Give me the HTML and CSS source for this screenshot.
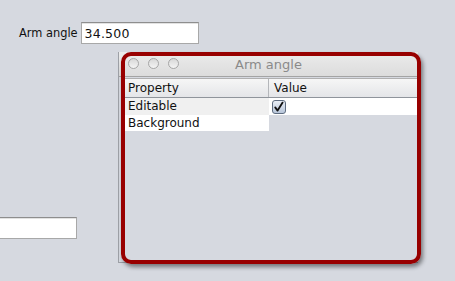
FILE: index.html
```html
<!DOCTYPE html>
<html>
<head>
<meta charset="utf-8">
<link rel="stylesheet" href="styles.css">
</head>
<body>
<div class="form">
  <div class="row">
    <span class="label">Arm angle</span>
    <div class="field">34.500</div>
  </div>
  <div class="field field-bottom"></div>
</div>

<div class="window">
  <div class="titlebar">
    <div class="lights">
      <span class="light"></span><span class="light"></span><span class="light"></span>
    </div>
    <div class="title">Arm angle</div>
  </div>
  <div class="table">
    <div class="thead">
      <div class="th th-prop">Property</div>
      <div class="th th-val">Value</div>
    </div>
    <div class="tr tr-alt">
      <div class="td td-prop">Editable</div>
      <div class="td td-val">
        <span class="check">
          <svg width="14" height="14" viewBox="0 0 14 14"><path d="M3.2 7.4 L5.6 10.6 L10.6 2.6" fill="none" stroke="#111" stroke-width="1.8" stroke-linecap="round" stroke-linejoin="round"/></svg>
        </span>
      </div>
    </div>
    <div class="tr">
      <div class="td td-prop td-white">Background</div>
    </div>
  </div>
</div>

<div class="annot"></div>
</body>
</html>
```
FILE: styles.css
```css
html, body {
  margin: 0;
  padding: 0;
}
body {
  width: 455px;
  height: 281px;
  overflow: hidden;
  background: #d6d9e0;
  font-family: "DejaVu Sans", sans-serif;
  font-size: 12px;
  color: #111;
  position: relative;
}
.form {
  display: flex;
  flex-direction: column;
  padding-top: 22px;
}
.row {
  display: flex;
  align-items: center;
  padding-left: 19px;
}
.label {
  margin-right: 3px;
  font-size: 11.4px;
}
.field {
  box-sizing: border-box;
  width: 118px;
  height: 22px;
  background: #fff;
  border: 1px solid #a8a8a8;
  border-top-color: #8e8e8e;
  box-shadow: inset 0 1px 0 #e2e2e2;
  padding: 3px 0 0 3px;
  font-size: 12.5px;
  letter-spacing: 0.2px;
}
.field-bottom {
  margin-top: 173px;
  margin-left: -41px;
}
.window {
  position: absolute;
  left: 118px;
  top: 52px;
  width: 300px;
  height: 211px;
  box-sizing: border-box;
  background: #d6d9e0;
  border-left: 1px solid #9da0a6;
  border-bottom: 1px solid #9da0a6;
  display: flex;
  flex-direction: column;
}
.titlebar {
  height: 24px;
  flex: none;
  background: linear-gradient(#ececec, #dcdcdc);
  border-bottom: 1px solid #a4a4a4;
  position: relative;
  display: flex;
  align-items: center;
  justify-content: center;
}
.lights {
  position: absolute;
  left: 9px;
  top: 6px;
  display: flex;
  gap: 9px;
}
.light {
  width: 9px;
  height: 9px;
  border-radius: 50%;
  border: 1px solid #a6a6a6;
  background: linear-gradient(#d8d8d8, #f4f4f4);
}
.title {
  color: #8a8a8a;
  font-size: 13px;
  margin-top: 1px;
}
.table {
  margin: 1px 0 0 3px;
  width: 295px;
  display: flex;
  flex-direction: column;
}
.thead {
  display: flex;
  height: 20px;
  box-sizing: border-box;
  background: linear-gradient(#f6f6f6, #e4e5e8);
  border-top: 1px solid #b0b0b0;
  border-bottom: 1px solid #8f949b;
}
.th {
  box-sizing: border-box;
  padding: 2px 0 0 6px;
}
.th-prop {
  width: 147px;
  border-right: 1px solid #b4b6ba;
}
.th-val {
  flex: 1;
  padding-left: 5px;
}
.tr {
  display: flex;
  height: 17px;
}
.td {
  box-sizing: border-box;
  padding: 1px 0 0 6px;
}
.td-prop {
  width: 147px;
}
.tr-alt .td-prop {
  background: #f0f0f0;
}
.td-val {
  flex: 1;
  background: #fff;
  padding: 2px 0 0 3px;
}
.td-white {
  background: #fff;
  height: 16px;
}
.check {
  display: block;
  width: 14px;
  height: 14px;
  box-sizing: border-box;
  border: 1px solid #5e6c80;
  border-radius: 3px;
  background: linear-gradient(#e9eef6, #b8c6da);
  position: relative;
}
.check svg {
  position: absolute;
  left: -1px;
  top: -1px;
}
.annot {
  position: absolute;
  left: 121px;
  top: 52px;
  width: 300px;
  height: 212px;
  box-sizing: border-box;
  border: 4px solid #980000;
  border-radius: 10px;
  box-shadow: 2px 3px 4px rgba(0, 0, 0, 0.45);
}
```
